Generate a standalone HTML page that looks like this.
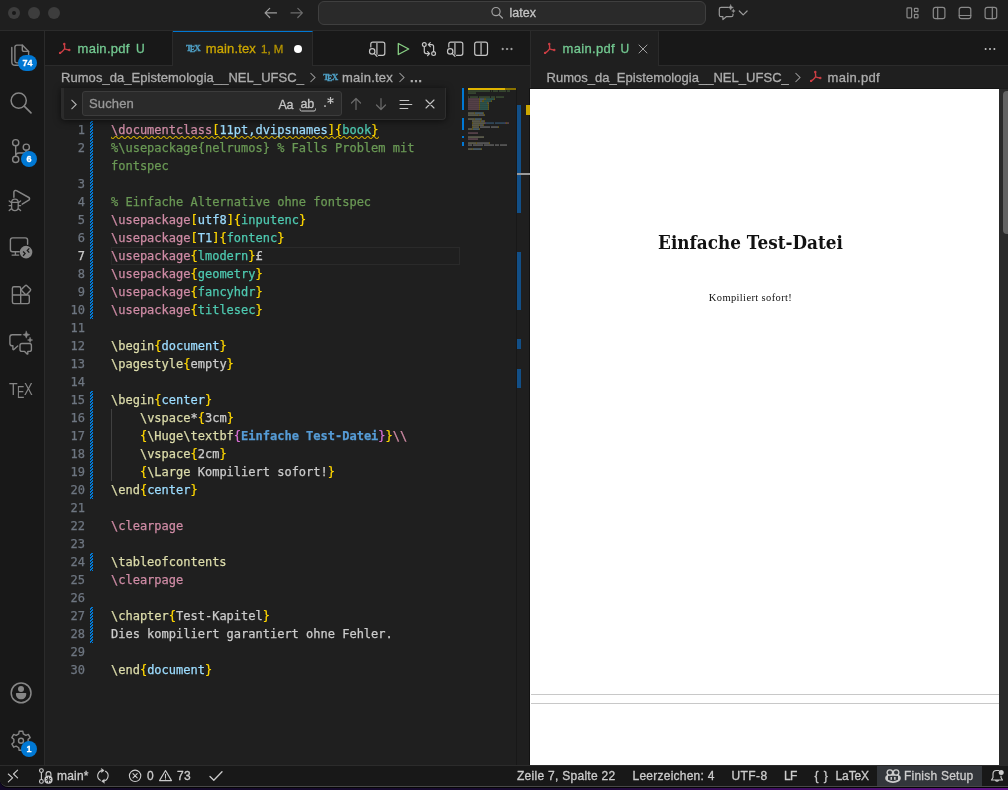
<!DOCTYPE html>
<html lang="de">
<head>
<meta charset="utf-8">
<title>main.tex — latex</title>
<style>
*{box-sizing:border-box;margin:0;padding:0}
html,body{width:1008px;height:790px;overflow:hidden;background:#1c1c1c}
body{font-family:"Liberation Sans",sans-serif;font-size:13px;color:#ccc;position:relative;-webkit-text-stroke:0.300px}
.abs{position:absolute}
#win{position:absolute;left:0;top:0;width:1008px;height:787px;border-bottom:1px solid #484848;box-shadow:0 1px 0 #050505;background:#181818;border-radius:0 0 0 8px;overflow:hidden;will-change:transform}
#deskbottom{position:absolute;left:0;top:776px;width:1008px;height:14px;background:linear-gradient(90deg,#120926 0%,#180a30 55%,#3a0c5c 75%,#64128a 100%)}
/* title bar */
#title{left:0;top:0;width:1008px;height:31px;background:#1f1f1f;border-bottom:1px solid #2b2b2b}
.tl{position:absolute;top:7px;width:12px;height:12px;border-radius:50%;background:#3d3d3d}
#cmd{left:318px;top:1px;width:388px;height:24px;background:#2a2a2a;border:1px solid #3f3f3f;border-radius:6px}
#cmd span{position:absolute;left:190.500px;top:3.500px;font-size:12.500px;line-height:15px;color:#c4c4c4}
/* activity bar */
#act{left:0;top:31px;width:45px;height:734px;background:#181818;border-right:1px solid #2b2b2b}
.badge{position:absolute;background:#0078d4;color:#fff;font-size:9px;font-weight:bold;border-radius:9px;height:16px;line-height:16px;text-align:center}
.tex{color:#868686;font-size:15.700px;line-height:11px;height:11px;transform-origin:0 0;-webkit-text-stroke:0}
/* tabs */
.tabs{top:31px;height:35px;background:#181818;border-bottom:1px solid #2b2b2b}
.tab{position:absolute;top:0;height:35px;border-right:1px solid #2b2b2b;font-size:13px;line-height:35px;white-space:nowrap}
.tab.active{background:#1f1f1f;height:35px;border-top:1px solid #0078d4;line-height:33px}
.texi{font-family:"Liberation Serif",serif;font-size:9px;font-weight:bold;line-height:10px;color:#4f9fc4}
.crumbs{top:66px;height:22px;background:#1f1f1f;font-size:13px;line-height:24px;color:#adadad;white-space:nowrap}
/* editor */
#ed1{left:45px;top:88px;width:485px;height:678px;background:#1f1f1f}
#ed2{left:530px;top:88px;width:478px;height:678px;background:#1f1f1f}
.code{font-family:"DejaVu Sans Mono","Liberation Mono",monospace;font-size:12px;line-height:18px;white-space:pre;-webkit-text-stroke:0.250px}
.ln{position:absolute;left:0;width:40px;text-align:right;color:#6e7681;height:18px}
.cl{position:absolute;left:66px;height:18px;color:#ccc}
.k{color:#cf8ba5}.y{color:#ffd700}.p{color:#9cdcfe}.c{color:#4ec9b0}.g{color:#6a9955}.f{color:#dcdcaa}.o{color:#da70d6}.b{color:#569cd6;font-weight:bold}
.ln.cur{color:#ccc}
.hatch{width:3px;background:repeating-linear-gradient(135deg,#0078d4 0 1.05px,#1f1f1f 1.05px 1.414px)}

.pdf{font-family:"Liberation Serif","DejaVu Serif",serif;white-space:nowrap;-webkit-text-stroke:0}
/* status */
#status{left:0;top:765px;width:1008px;height:21px;background:#181818;border-top:1px solid #2b2b2b;font-size:12px;line-height:21px;color:#ccc;white-space:nowrap}
#status span{position:absolute;top:0}
svg{position:absolute;overflow:visible}
</style>
</head>
<body>
<div id="deskbottom"></div>
<div id="win">

<!-- TITLE BAR -->
<div id="title" class="abs">
  <div class="tl" style="left:8px"><i class="abs" style="left:4px;top:4px;width:4px;height:4px;border-radius:50%;background:#181818"></i></div>
  <div class="tl" style="left:28px"></div>
  <div class="tl" style="left:48px"></div>
  <svg style="left:0;top:0" width="1008" height="30" viewBox="0 0 1008 30" fill="none" stroke="#8a8a8a" stroke-width="1.200" stroke-linecap="round" stroke-linejoin="round">
    <path d="M276.500 12.900H265.200M269.700 8.300L265.100 12.900L269.700 17.500" stroke="#9d9d9d"/>
    <path d="M291 12.900H302.300M297.800 8.300L302.400 12.900L297.800 17.500" stroke="#6c6c6c"/>
    <path d="M728 7.400H721.100A1.800 1.800 0 0 0 719.300 9.200V14.900A1.800 1.800 0 0 0 721.100 16.700H722.900V19.600L726.200 16.700H731.200A1.800 1.800 0 0 0 733 14.900V14" stroke="#9a9a9a"/>
    <path d="M730.700 4.700L731.500 6.600L733.400 7.400L731.500 8.200L730.700 10.100L729.900 8.200L728 7.400L729.900 6.600Z" fill="#9a9a9a" stroke="#9a9a9a" stroke-width="0.400"/>
    <path d="M733.400 9.200L733.900 10.500L735.200 11L733.900 11.500L733.400 12.800L732.900 11.500L731.600 11L732.900 10.500Z" fill="#9a9a9a" stroke="#9a9a9a" stroke-width="0.400"/>
    <path d="M739.300 11L743.200 14.900L747.100 11" stroke="#9a9a9a"/>
    <rect x="907" y="7.800" width="4.600" height="10" rx="0.800"/><rect x="914.400" y="8.300" width="3.600" height="3.400" rx="0.600"/><rect x="914.400" y="14.400" width="3.600" height="3.400" rx="0.600"/>
    <rect x="933.300" y="7.300" width="11.600" height="11.400" rx="2.200"/><path d="M937.700 7.300V18.700"/>
    <rect x="959.200" y="7.300" width="11.600" height="11.400" rx="2.200"/><path d="M959.200 15.500H970.800"/>
    <rect x="985.100" y="7.300" width="11.600" height="11.400" rx="2.200"/><path d="M992.300 7.300V18.700"/>
  </svg>
  <div id="cmd" class="abs"><svg style="left:171px;top:3px" width="14" height="14" viewBox="490 5 14 14" fill="none" stroke="#a0a0a0" stroke-width="1.200" stroke-linecap="round"><circle cx="496" cy="11.600" r="4.100"/><path d="M499 14.600L502.400 18"/></svg><span id="latex">latex</span></div>
</div>

<!-- ACTIVITY BAR -->
<div id="act" class="abs">
<svg style="left:0;top:0" width="45" height="735" viewBox="0 31 45 735" fill="none" stroke="#868686" stroke-width="1.4" stroke-linejoin="round" stroke-linecap="round">
<!-- explorer -->
<path d="M14.9 47A1.9 1.9 0 0 1 16.8 45.100H22.300L28.600 51.400V61A1.900 1.900 0 0 1 26.700 62.900H16.800A1.900 1.900 0 0 1 14.900 61Z"/>
<path d="M22.300 45.100V49.500A1.900 1.900 0 0 0 24.200 51.400H28.600"/>
<path d="M11.800 47.500V62A3.300 3.300 0 0 0 15.100 65.300H24"/>
<!-- search -->
<circle cx="18.700" cy="100.600" r="7.600" stroke-width="1.500"/><path d="M24.200 106.100L31 112.900" stroke-width="1.600"/>
<!-- scm -->
<circle cx="15.700" cy="142.700" r="3.100"/><circle cx="15.700" cy="159.400" r="3.100"/><circle cx="26.300" cy="147.200" r="3.100"/>
<path d="M15.700 145.800V156.300M26.300 150.300V150.500A2.500 2.500 0 0 1 23.800 153H19A3.300 3.300 0 0 0 15.700 156.300"/>
<!-- debug -->
<path d="M13.900 197.300V192.200A1.700 1.700 0 0 1 16.500 190.700L28.800 197.500A1.600 1.600 0 0 1 28.800 200.200L22.200 204.100" stroke-width="1.500"/>
<path d="M11.600 202.400A3.300 3.300 0 0 1 18.200 202.400V207.300A3.300 3.300 0 0 1 11.600 207.300ZM11.600 202.400H18.200M9.200 201L11.500 202.700M9.100 205.600H11.500M9.200 210.600L11.700 208.500M20.600 201L18.300 202.700M20.700 205.600H18.300M20.600 210.600L18.100 208.500" stroke-width="1.300"/>
<!-- remote -->
<path d="M27.600 244.200V240.100A2.200 2.200 0 0 0 25.400 237.900H12.600A2.200 2.200 0 0 0 10.400 240.100V249.600A2.200 2.200 0 0 0 12.600 251.800H19.200M15.400 251.800V255M12.100 255.100H18.700"/>
<circle cx="26.050" cy="252.100" r="6.300" fill="#868686" stroke="none"/>
<path d="M23.100 251.500L25.100 253.600L23.100 255.700M29.300 248.400L27.300 250.500L29.300 252.600" stroke="#181818" stroke-width="1.300" stroke-linecap="butt" stroke-linejoin="miter"/>
<!-- extensions -->
<path d="M12.400 288.200A1.500 1.500 0 0 1 13.900 286.700H19.200A1.500 1.500 0 0 1 20.700 288.200V295H27.800A1.500 1.500 0 0 1 29.300 296.500V302.100A1.500 1.500 0 0 1 27.800 303.600H13.900A1.500 1.500 0 0 1 12.400 302.100ZM12.400 295H20.700V303.600"/>
<rect x="22.450" y="286.300" width="7.200" height="7.200" rx="1.200" transform="rotate(45 26.050 289.900)"/>
<!-- chat -->
<path d="M21 334.700H12.300A2.400 2.400 0 0 0 9.900 337.100V343.400A2.400 2.400 0 0 0 12.300 345.800H12.900V349.200A0.600 0.600 0 0 0 13.900 349.600L17.700 345.900"/>
<path d="M22 343.500H29.400A2 2 0 0 1 31.400 345.500V349.400A2 2 0 0 1 29.400 351.400H27.800V353.800A0.400 0.400 0 0 1 27.100 354L24.600 351.400H22A2 2 0 0 1 20 349.400V345.500A2 2 0 0 1 22 343.500Z"/>
<path d="M26.300 331.200L27.300 333.700L29.800 334.700L27.300 335.700L26.300 338.200L25.300 335.700L22.800 334.700L25.300 333.700Z" fill="#868686" stroke-width="0.500"/>
<path d="M30.100 337.300L30.900 339.200L32.800 340L30.900 340.800L30.100 342.700L29.300 340.800L27.400 340L29.300 339.200Z" fill="#868686" stroke-width="0.400"/>
<!-- account -->
<circle cx="21.100" cy="692.900" r="9.900" stroke-width="1.500"/>
<circle cx="21" cy="689" r="3" fill="#868686" stroke="none"/>
<path d="M16.600 693H25.600A0.700 0.700 0 0 1 26.300 693.700C26.300 697.200 24.200 699.300 21.100 699.300S15.900 697.200 15.900 693.700A0.700 0.700 0 0 1 16.600 693Z" fill="#868686" stroke="none"/>
<!-- gear -->
<path d="M23.26 733.86 L22.85 731.28 L19.15 731.28 L18.74 733.86 L16.12 735.38 L13.68 734.44 L11.83 737.64 L13.86 739.28 L13.86 742.32 L11.83 743.96 L13.68 747.16 L16.12 746.22 L18.74 747.74 L19.15 750.32 L22.85 750.32 L23.26 747.74 L25.88 746.22 L28.32 747.16 L30.17 743.96 L28.14 742.32 L28.14 739.28 L30.17 737.64 L28.32 734.44 L25.88 735.38Z" stroke-width="1.400"/>
<circle cx="21" cy="740.800" r="2.500" stroke-width="1.400"/>
</svg>
<div class="badge" style="left:18px;top:24px;width:19px">74</div>
<div class="badge" style="left:21px;top:120px;width:16px">6</div>
<div class="badge" style="left:21px;top:710px;width:16px">1</div>
<div class="abs tex" style="left:8.800px;top:353.100px;transform:scaleX(0.900)">T</div><div class="abs tex" style="left:17px;top:356.100px;transform:scaleX(0.700)">E</div><div class="abs tex" style="left:23.900px;top:353.100px;transform:scaleX(0.830)">X</div>
</div>

<!-- GROUP 1 -->
<div class="abs tabs" style="left:45px;width:485px">
  <div class="tab" style="left:0;width:128px">
    <svg style="left:13px;top:11px" width="13" height="13" viewBox="58 42 13 13" fill="none" stroke="#cc3e44" stroke-width="1.400" stroke-linecap="round"><path d="M64.300 43.800C64.600 46 64.800 47.500 64.600 48.900C63.500 50.500 62 52 60 53M64.600 48.900C66 49.500 67.500 49.900 69.400 50"/><circle cx="64.300" cy="43.900" r="0.500"/><circle cx="60.100" cy="52.900" r="0.500"/><circle cx="69.300" cy="50" r="0.500"/></svg>
    <span class="abs t" id="t1" style="left:32.500px;letter-spacing:0.300px;color:#73c991">main.pdf</span><span class="abs t" id="t1u" style="left:91px;top:1.300px;color:#73c991;font-size:12px">U</span></div>
  <div class="tab active" style="left:128px;width:140px">
    <span class="abs texi" style="left:13px;top:10.700px">T</span><span class="abs texi" style="left:17.100px;top:13px;font-size:7.500px">E</span><span class="abs texi" style="left:21.300px;top:10.700px">X</span>
    <span class="abs t" id="t2" style="left:32.800px;letter-spacing:0.120px;color:#cca700">main.tex</span><span class="abs t" id="t2m" style="left:88px;top:1px;color:#b59400;font-size:11.500px">1, M</span>
    <i class="abs" style="left:121px;top:12.800px;width:8.400px;height:8.400px;border-radius:50%;background:#fff"></i></div>
  <!-- editor actions -->
  <svg style="left:315px;top:0" width="170" height="34" viewBox="360 31 170 34" fill="none" stroke="#c5c5c5" stroke-width="1.200" stroke-linejoin="round" stroke-linecap="round">
    <path d="M376 42.200H382.800A2 2 0 0 1 384.800 44.200V53.300A2 2 0 0 1 382.800 55.300H378.500M376 42.200H372.800A2 2 0 0 0 370.800 44.200V47" /><path d="M376.900 42.800V54.700" stroke="#8c8c8c" stroke-width="1.800" stroke-linecap="butt"/><circle cx="372.200" cy="51.400" r="2.700"/><path d="M374.100 53.400L377 56.400"/>
    <path d="M398.300 43.500V54.500L408.700 49Z" stroke="#89d185" stroke-width="1.300"/>
    <circle cx="424.300" cy="44.600" r="1.900"/><circle cx="433.600" cy="53.600" r="1.900"/><path d="M424.300 46.500V51.600A2 2 0 0 0 426.300 53.600H429.500M427.600 51.600L429.600 53.600L427.600 55.600M433.600 51.700V46.600A2 2 0 0 0 431.600 44.600H428.500M430.300 42.600L428.300 44.600L430.300 46.600"/>
    <path d="M454 42.200H460.800A2 2 0 0 1 462.800 44.200V53.300A2 2 0 0 1 460.800 55.300H456.500M454 42.200H450.800A2 2 0 0 0 448.800 44.200V47" /><path d="M454.900 42.800V54.700" stroke="#8c8c8c" stroke-width="1.800" stroke-linecap="butt"/><circle cx="450.200" cy="51.400" r="2.700"/><path d="M452.100 53.400L455 56.400"/>
    <rect x="474.700" y="42.200" width="12.800" height="13.100" rx="2"/><path d="M481.100 42.800V54.700" stroke="#8c8c8c" stroke-width="1.800" stroke-linecap="butt"/>
    <circle cx="502.600" cy="49" r="0.800" fill="#c5c5c5" stroke-width="0.400"/><circle cx="507" cy="49" r="0.800" fill="#c5c5c5" stroke-width="0.400"/><circle cx="511.400" cy="49" r="0.800" fill="#c5c5c5" stroke-width="0.400"/>
  </svg>
</div>
<div class="abs crumbs" style="left:45px;width:485px"><span class="abs" id="c1" style="left:16px;letter-spacing:0.050px">Rumos_da_Epistemologia__NEL_UFSC_</span>
  <svg style="left:264px;top:6px" width="8" height="11" viewBox="0 0 8 11" fill="none" stroke="#9c9c9c" stroke-width="1.050"><path d="M1.500 1L6 5.500L1.500 10"/></svg>
  <span class="abs texi" style="left:278.300px;top:5.700px">T</span><span class="abs texi" style="left:282.300px;top:8px;font-size:7.500px">E</span><span class="abs texi" style="left:286.700px;top:5.700px">X</span>
  <span class="abs" id="c2" style="left:297px;letter-spacing:0.240px">main.tex</span>
  <svg style="left:353px;top:6px" width="8" height="11" viewBox="0 0 8 11" fill="none" stroke="#9c9c9c" stroke-width="1.050"><path d="M1.500 1L6 5.500L1.500 10"/></svg>
  <span class="abs" id="c3" style="left:364.500px;letter-spacing:-0.600px;font-weight:bold">…</span></div>
<div id="ed1" class="abs">
<!-- gutter diff decorations -->
<svg style="left:45px;top:0" width="3" height="678" viewBox="0 0 3 678" shape-rendering="crispEdges"><defs><pattern id="hat" width="3" height="3" patternUnits="userSpaceOnUse"><rect width="3" height="3" fill="#007ad8"/><rect x="0" y="0" width="1" height="1" fill="#1f1f1f"/><rect x="2" y="1" width="1" height="1" fill="#1f1f1f"/><rect x="1" y="2" width="1" height="1" fill="#1f1f1f"/></pattern></defs><rect x="0" y="33" width="3" height="198" fill="url(#hat)"/><rect x="0" y="303" width="3" height="108" fill="url(#hat)"/><rect x="0" y="465" width="3" height="18" fill="url(#hat)"/><rect x="0" y="519" width="3" height="36" fill="url(#hat)"/></svg>
<div class="abs" style="left:484px;top:0;width:1px;height:678px;background:#121212"></div>
<!-- current line -->
<div class="abs" style="left:66px;top:159px;width:349px;height:18px;border:1px solid #2a2a2a"></div>
<!-- indent guide -->
<div class="abs" style="left:66px;top:321px;width:1px;height:72px;background:#404040"></div>
<svg style="left:66px;top:48px" width="268" height="3" viewBox="0 0 268 3"><defs><pattern id="sqg" width="6" height="3" patternUnits="userSpaceOnUse"><g fill="#cca700"><polygon points="5.500,0 2.500,3 1.100,3 4.100,0"/><polygon points="4,0 6,2 6,0.600 5.400,0"/><polygon points="0,2 1,3 2.400,3 0,0.600"/></g></pattern></defs><rect width="268" height="3" fill="url(#sqg)"/></svg>
<!--CODE-->
<div class="ln code" style="top:33px">1</div>
<div class="cl code" style="top:33px"><span class="k sq">\documentclass</span><span class="sq"><span class="y">[</span><span class="p">11pt,dvipsnames</span><span class="y">]</span><span class="y">{</span><span class="c">book</span><span class="y">}</span></span></div>
<div class="ln code" style="top:51px">2</div>
<div class="cl code" style="top:51px"><span class="g">%\usepackage{nelrumos} % Falls Problem mit</span></div>
<div class="cl code" style="top:69px"><span class="g">fontspec</span></div>
<div class="ln code" style="top:87px">3</div>
<div class="ln code" style="top:105px">4</div>
<div class="cl code" style="top:105px"><span class="g">% Einfache Alternative ohne fontspec</span></div>
<div class="ln code" style="top:123px">5</div>
<div class="cl code" style="top:123px"><span class="k">\usepackage</span><span class="y">[</span><span class="p">utf8</span><span class="y">]{</span><span class="c">inputenc</span><span class="y">}</span></div>
<div class="ln code" style="top:141px">6</div>
<div class="cl code" style="top:141px"><span class="k">\usepackage</span><span class="y">[</span><span class="p">T1</span><span class="y">]{</span><span class="c">fontenc</span><span class="y">}</span></div>
<div class="ln code cur" style="top:159px">7</div>
<div class="cl code" style="top:159px"><span class="k">\usepackage</span><span class="y">{</span><span class="c">lmodern</span><span class="y">}</span>£</div>
<div class="ln code" style="top:177px">8</div>
<div class="cl code" style="top:177px"><span class="k">\usepackage</span><span class="y">{</span><span class="c">geometry</span><span class="y">}</span></div>
<div class="ln code" style="top:195px">9</div>
<div class="cl code" style="top:195px"><span class="k">\usepackage</span><span class="y">{</span><span class="c">fancyhdr</span><span class="y">}</span></div>
<div class="ln code" style="top:213px">10</div>
<div class="cl code" style="top:213px"><span class="k">\usepackage</span><span class="y">{</span><span class="c">titlesec</span><span class="y">}</span></div>
<div class="ln code" style="top:231px">11</div>
<div class="ln code" style="top:249px">12</div>
<div class="cl code" style="top:249px"><span class="f">\begin</span><span class="y">{</span><span class="p">document</span><span class="y">}</span></div>
<div class="ln code" style="top:267px">13</div>
<div class="cl code" style="top:267px"><span class="f">\pagestyle</span><span class="y">{</span>empty<span class="y">}</span></div>
<div class="ln code" style="top:285px">14</div>
<div class="ln code" style="top:303px">15</div>
<div class="cl code" style="top:303px"><span class="f">\begin</span><span class="y">{</span><span class="p">center</span><span class="y">}</span></div>
<div class="ln code" style="top:321px">16</div>
<div class="cl code" style="top:321px">    <span class="f">\vspace</span>*<span class="y">{</span>3cm<span class="y">}</span></div>
<div class="ln code" style="top:339px">17</div>
<div class="cl code" style="top:339px">    <span class="y">{</span><span class="f">\Huge\textbf</span><span class="o">{</span><span class="b">Einfache Test-Datei</span><span class="o">}</span><span class="y">}</span><span class="k">\\</span></div>
<div class="ln code" style="top:357px">18</div>
<div class="cl code" style="top:357px">    <span class="f">\vspace</span><span class="y">{</span>2cm<span class="y">}</span></div>
<div class="ln code" style="top:375px">19</div>
<div class="cl code" style="top:375px">    <span class="y">{</span><span class="f">\Large</span> Kompiliert sofort!<span class="y">}</span></div>
<div class="ln code" style="top:393px">20</div>
<div class="cl code" style="top:393px"><span class="f">\end</span><span class="y">{</span><span class="p">center</span><span class="y">}</span></div>
<div class="ln code" style="top:411px">21</div>
<div class="ln code" style="top:429px">22</div>
<div class="cl code" style="top:429px"><span class="k">\clearpage</span></div>
<div class="ln code" style="top:447px">23</div>
<div class="ln code" style="top:465px">24</div>
<div class="cl code" style="top:465px"><span class="f">\tableofcontents</span></div>
<div class="ln code" style="top:483px">25</div>
<div class="cl code" style="top:483px"><span class="k">\clearpage</span></div>
<div class="ln code" style="top:501px">26</div>
<div class="ln code" style="top:519px">27</div>
<div class="cl code" style="top:519px"><span class="f">\chapter</span><span class="y">{</span>Test-Kapitel<span class="y">}</span></div>
<div class="ln code" style="top:537px">28</div>
<div class="cl code" style="top:537px">Dies kompiliert garantiert ohne Fehler.</div>
<div class="ln code" style="top:555px">29</div>
<div class="ln code" style="top:573px">30</div>
<div class="cl code" style="top:573px"><span class="f">\end</span><span class="y">{</span><span class="p">document</span><span class="y">}</span></div>
<!--/CODE-->
<svg style="left:0;top:0" width="485" height="678" viewBox="45 88 485 678">
<g opacity="0.5">
<rect x="468" y="88.5" width="14" height="1.100" fill="#cf8ba5"/>
<rect x="482" y="88.5" width="1" height="1.100" fill="#ffd700"/>
<rect x="483" y="88.5" width="15" height="1.100" fill="#9cdcfe"/>
<rect x="498" y="88.5" width="1" height="1.100" fill="#ffd700"/>
<rect x="499" y="88.5" width="1" height="1.100" fill="#ffd700"/>
<rect x="500" y="88.5" width="4" height="1.100" fill="#4ec9b0"/>
<rect x="504" y="88.5" width="1" height="1.100" fill="#ffd700"/>
<rect x="468" y="90.5" width="22" height="1.100" fill="#6a9955"/>
<rect x="491" y="90.5" width="1" height="1.100" fill="#6a9955"/>
<rect x="493" y="90.5" width="5" height="1.100" fill="#6a9955"/>
<rect x="499" y="90.5" width="7" height="1.100" fill="#6a9955"/>
<rect x="507" y="90.5" width="3" height="1.100" fill="#6a9955"/>
<rect x="468" y="92.5" width="8" height="1.100" fill="#6a9955"/>
<rect x="468" y="96.5" width="1" height="1.100" fill="#6a9955"/>
<rect x="470" y="96.5" width="8" height="1.100" fill="#6a9955"/>
<rect x="479" y="96.5" width="11" height="1.100" fill="#6a9955"/>
<rect x="491" y="96.5" width="4" height="1.100" fill="#6a9955"/>
<rect x="496" y="96.5" width="8" height="1.100" fill="#6a9955"/>
<rect x="468" y="98.5" width="11" height="1.100" fill="#cf8ba5"/>
<rect x="479" y="98.5" width="1" height="1.100" fill="#ffd700"/>
<rect x="480" y="98.5" width="4" height="1.100" fill="#9cdcfe"/>
<rect x="484" y="98.5" width="2" height="1.100" fill="#ffd700"/>
<rect x="486" y="98.5" width="8" height="1.100" fill="#4ec9b0"/>
<rect x="494" y="98.5" width="1" height="1.100" fill="#ffd700"/>
<rect x="468" y="100.5" width="11" height="1.100" fill="#cf8ba5"/>
<rect x="479" y="100.5" width="1" height="1.100" fill="#ffd700"/>
<rect x="480" y="100.5" width="2" height="1.100" fill="#9cdcfe"/>
<rect x="482" y="100.5" width="2" height="1.100" fill="#ffd700"/>
<rect x="484" y="100.5" width="7" height="1.100" fill="#4ec9b0"/>
<rect x="491" y="100.5" width="1" height="1.100" fill="#ffd700"/>
<rect x="468" y="102.5" width="11" height="1.100" fill="#cf8ba5"/>
<rect x="479" y="102.5" width="1" height="1.100" fill="#ffd700"/>
<rect x="480" y="102.5" width="7" height="1.100" fill="#4ec9b0"/>
<rect x="487" y="102.5" width="1" height="1.100" fill="#ffd700"/>
<rect x="488" y="102.5" width="1" height="1.100" fill="#cccccc"/>
<rect x="468" y="104.5" width="11" height="1.100" fill="#cf8ba5"/>
<rect x="479" y="104.5" width="1" height="1.100" fill="#ffd700"/>
<rect x="480" y="104.5" width="8" height="1.100" fill="#4ec9b0"/>
<rect x="488" y="104.5" width="1" height="1.100" fill="#ffd700"/>
<rect x="468" y="106.5" width="11" height="1.100" fill="#cf8ba5"/>
<rect x="479" y="106.5" width="1" height="1.100" fill="#ffd700"/>
<rect x="480" y="106.5" width="8" height="1.100" fill="#4ec9b0"/>
<rect x="488" y="106.5" width="1" height="1.100" fill="#ffd700"/>
<rect x="468" y="108.5" width="11" height="1.100" fill="#cf8ba5"/>
<rect x="479" y="108.5" width="1" height="1.100" fill="#ffd700"/>
<rect x="480" y="108.5" width="8" height="1.100" fill="#4ec9b0"/>
<rect x="488" y="108.5" width="1" height="1.100" fill="#ffd700"/>
<rect x="468" y="112.5" width="6" height="1.100" fill="#dcdcaa"/>
<rect x="474" y="112.5" width="1" height="1.100" fill="#ffd700"/>
<rect x="475" y="112.5" width="8" height="1.100" fill="#9cdcfe"/>
<rect x="483" y="112.5" width="1" height="1.100" fill="#ffd700"/>
<rect x="468" y="114.5" width="10" height="1.100" fill="#dcdcaa"/>
<rect x="478" y="114.5" width="1" height="1.100" fill="#ffd700"/>
<rect x="479" y="114.5" width="5" height="1.100" fill="#cccccc"/>
<rect x="484" y="114.5" width="1" height="1.100" fill="#ffd700"/>
<rect x="468" y="118.5" width="6" height="1.100" fill="#dcdcaa"/>
<rect x="474" y="118.5" width="1" height="1.100" fill="#ffd700"/>
<rect x="475" y="118.5" width="6" height="1.100" fill="#9cdcfe"/>
<rect x="481" y="118.5" width="1" height="1.100" fill="#ffd700"/>
<rect x="472" y="120.5" width="7" height="1.100" fill="#dcdcaa"/>
<rect x="479" y="120.5" width="1" height="1.100" fill="#cccccc"/>
<rect x="480" y="120.5" width="1" height="1.100" fill="#ffd700"/>
<rect x="481" y="120.5" width="3" height="1.100" fill="#cccccc"/>
<rect x="484" y="120.5" width="1" height="1.100" fill="#ffd700"/>
<rect x="472" y="122.5" width="1" height="1.100" fill="#ffd700"/>
<rect x="473" y="122.5" width="12" height="1.100" fill="#dcdcaa"/>
<rect x="485" y="122.5" width="1" height="1.100" fill="#da70d6"/>
<rect x="486" y="122.5" width="8" height="1.100" fill="#569cd6"/>
<rect x="495" y="122.5" width="10" height="1.100" fill="#569cd6"/>
<rect x="505" y="122.5" width="1" height="1.100" fill="#da70d6"/>
<rect x="506" y="122.5" width="1" height="1.100" fill="#ffd700"/>
<rect x="507" y="122.5" width="2" height="1.100" fill="#cf8ba5"/>
<rect x="472" y="124.5" width="7" height="1.100" fill="#dcdcaa"/>
<rect x="479" y="124.5" width="1" height="1.100" fill="#ffd700"/>
<rect x="480" y="124.5" width="3" height="1.100" fill="#cccccc"/>
<rect x="483" y="124.5" width="1" height="1.100" fill="#ffd700"/>
<rect x="472" y="126.5" width="1" height="1.100" fill="#ffd700"/>
<rect x="473" y="126.5" width="6" height="1.100" fill="#dcdcaa"/>
<rect x="480" y="126.5" width="10" height="1.100" fill="#cccccc"/>
<rect x="491" y="126.5" width="7" height="1.100" fill="#cccccc"/>
<rect x="498" y="126.5" width="1" height="1.100" fill="#ffd700"/>
<rect x="468" y="128.5" width="4" height="1.100" fill="#dcdcaa"/>
<rect x="472" y="128.5" width="1" height="1.100" fill="#ffd700"/>
<rect x="473" y="128.5" width="6" height="1.100" fill="#9cdcfe"/>
<rect x="479" y="128.5" width="1" height="1.100" fill="#ffd700"/>
<rect x="468" y="132.5" width="10" height="1.100" fill="#cf8ba5"/>
<rect x="468" y="136.5" width="16" height="1.100" fill="#dcdcaa"/>
<rect x="468" y="138.5" width="10" height="1.100" fill="#cf8ba5"/>
<rect x="468" y="142.5" width="8" height="1.100" fill="#dcdcaa"/>
<rect x="476" y="142.5" width="1" height="1.100" fill="#ffd700"/>
<rect x="477" y="142.5" width="12" height="1.100" fill="#cccccc"/>
<rect x="489" y="142.5" width="1" height="1.100" fill="#ffd700"/>
<rect x="468" y="144.5" width="4" height="1.100" fill="#cccccc"/>
<rect x="473" y="144.5" width="10" height="1.100" fill="#cccccc"/>
<rect x="484" y="144.5" width="10" height="1.100" fill="#cccccc"/>
<rect x="495" y="144.5" width="4" height="1.100" fill="#cccccc"/>
<rect x="500" y="144.5" width="7" height="1.100" fill="#cccccc"/>
<rect x="468" y="148.5" width="4" height="1.100" fill="#dcdcaa"/>
<rect x="472" y="148.5" width="1" height="1.100" fill="#ffd700"/>
<rect x="473" y="148.5" width="8" height="1.100" fill="#9cdcfe"/>
<rect x="481" y="148.5" width="1" height="1.100" fill="#ffd700"/>
</g><g shape-rendering="crispEdges">
<rect x="468" y="88" width="48" height="2" fill="#8a7200"/><rect x="468" y="88" width="37" height="2" fill="#e0b400"/>
<rect x="462" y="88" width="2" height="22" fill="#0078d4"/>
<rect x="462" y="118" width="2" height="12" fill="#0078d4"/>
<rect x="462" y="136" width="2" height="2" fill="#0078d4"/>
<rect x="462" y="142" width="2" height="4" fill="#0078d4"/>
<rect x="516" y="88" width="1" height="678" fill="#181818"/>
<rect x="517" y="105" width="4" height="108" fill="#124f87"/>
<rect x="517" y="252" width="4" height="58" fill="#124f87"/>
<rect x="517" y="339" width="4" height="10" fill="#124f87"/>
<rect x="517" y="369" width="4" height="19" fill="#124f87"/>
<rect x="526" y="105" width="4" height="10" fill="#cca700"/>
<rect x="517" y="173" width="13" height="2" fill="#9a9a9a"/>
</g></svg>
<!-- find widget -->
<div class="abs" id="find" style="left:16px;top:0;width:385px;height:32px;background:#202020;border-left:3px solid #2b2b2b;border-right:1px solid #2e2e2e;border-bottom:1px solid #2e2e2e;border-radius:0 0 4px 4px;box-shadow:0 1px 7px rgba(0,0,0,0.600)">
  <svg style="left:6px;top:10.500px" width="8" height="11" viewBox="0 0 8 11" fill="none" stroke="#b4b4b4" stroke-width="1.100"><path d="M1.500 0.800L6.200 5.500L1.500 10.200"/></svg>
  <div class="abs" style="left:18px;top:3px;width:260px;height:25px;background:#2a2a2a;border:1px solid #3c3c3c;border-radius:3px"></div>
  <span class="abs" id="such" style="left:25px;letter-spacing:0.150px;top:8px;font-size:13px;line-height:16px;color:#989898">Suchen</span>
  <span class="abs" style="left:214.500px;top:9px;font-size:12.500px;line-height:16px;color:#c5c5c5;letter-spacing:-0.300px">Aa</span>
  <span class="abs" style="left:236.500px;top:7.500px;font-size:12.500px;line-height:16px;color:#c5c5c5;letter-spacing:-0.200px">ab</span>
  <svg style="left:235px;top:6.600px" width="20" height="20" viewBox="0 0 20 20" fill="none" stroke="#c5c5c5" stroke-width="1"><path d="M1 13.500V14.500A1.500 1.500 0 0 0 2.500 16H15A1.500 1.500 0 0 0 16.500 14.500V13.500"/></svg>
  <svg style="left:258px;top:6px" width="14" height="16" viewBox="0 0 14 16" fill="none" stroke="#c5c5c5" stroke-width="1.200"><rect x="2.200" y="11.300" width="1.600" height="1.600" fill="#c5c5c5" stroke="none"/><path d="M8.500 3V10M5.500 4.800L11.500 8.200M11.500 4.800L5.500 8.200"/></svg>
  <svg style="left:286px;top:9px" width="12" height="14" viewBox="0 0 12 14" fill="none" stroke="#6b6b6b" stroke-width="1.200" stroke-linecap="round" stroke-linejoin="round"><path d="M6 12.500V1.500M1.500 6L6 1.500L10.500 6"/></svg>
  <svg style="left:311px;top:9px" width="12" height="14" viewBox="0 0 12 14" fill="none" stroke="#6b6b6b" stroke-width="1.200" stroke-linecap="round" stroke-linejoin="round"><path d="M6 1.500V12.500M1.500 8L6 12.500L10.500 8"/></svg>
  <svg style="left:335px;top:10px" width="14" height="12" viewBox="0 0 14 12" fill="none" stroke="#c5c5c5" stroke-width="1.100" stroke-linecap="round"><path d="M1 2.500H9.800M1 6.500H12.800M1 10.500H8.800"/></svg>
  <svg style="left:361px;top:11px" width="10" height="10" viewBox="0 0 10 10" fill="none" stroke="#c5c5c5" stroke-width="1.100" stroke-linecap="round"><path d="M1 1L9 9M9 1L1 9"/></svg>
</div>
</div>

<!-- GROUP 2 -->
<div class="abs tabs" style="left:530px;width:478px;border-left:1px solid #2b2b2b">
  <div class="tab active" style="left:0;width:128px;border-top-color:#1f1f1f;">
    <svg style="left:12px;top:10px" width="13" height="13" viewBox="58 42 13 13" fill="none" stroke="#cc3e44" stroke-width="1.400" stroke-linecap="round"><path d="M64.300 43.800C64.600 46 64.800 47.500 64.600 48.900C63.500 50.500 62 52 60 53M64.600 48.900C66 49.500 67.500 49.900 69.400 50"/><circle cx="64.300" cy="43.900" r="0.500"/><circle cx="60.100" cy="52.900" r="0.500"/><circle cx="69.300" cy="50" r="0.500"/></svg>
    <span class="abs t" id="t3" style="left:31.500px;letter-spacing:0.330px;color:#73c991">main.pdf</span><span class="abs t" id="t3u" style="left:89.500px;top:1.300px;color:#73c991;font-size:12px">U</span>
    <svg style="left:107px;top:12px" width="10" height="10" viewBox="0 0 10 10" stroke="#a0a0a0" stroke-width="1" stroke-linecap="round"><path d="M1 1L9 9M9 1L1 9"/></svg>
  </div>
  <svg style="left:452px;top:16px" width="14" height="4" viewBox="0 0 14 4"><circle cx="2.600" cy="2" r="1" fill="#c5c5c5"/><circle cx="7" cy="2" r="1" fill="#c5c5c5"/><circle cx="11.400" cy="2" r="1" fill="#c5c5c5"/></svg>
</div>
<div class="abs crumbs" style="left:530px;width:478px;border-left:1px solid #2b2b2b"><span class="abs" id="c4" style="left:15.500px;letter-spacing:0.030px">Rumos_da_Epistemologia__NEL_UFSC_</span>
  <svg style="left:263px;top:6px" width="8" height="11" viewBox="0 0 8 11" fill="none" stroke="#9c9c9c" stroke-width="1.050"><path d="M1.500 1L6 5.500L1.500 10"/></svg>
  <svg style="left:278px;top:4px" width="13" height="13" viewBox="58 42 13 13" fill="none" stroke="#cc3e44" stroke-width="1.400" stroke-linecap="round"><path d="M64.300 43.800C64.600 46 64.800 47.500 64.600 48.900C63.500 50.500 62 52 60 53M64.600 48.900C66 49.500 67.500 49.900 69.400 50"/><circle cx="64.300" cy="43.900" r="0.500"/><circle cx="60.100" cy="52.900" r="0.500"/><circle cx="69.300" cy="50" r="0.500"/></svg>
  <span class="abs" id="c5" style="left:296.500px;letter-spacing:0.330px">main.pdf</span></div>
<div id="ed2" class="abs">
  <div class="abs" style="left:0;top:0;width:469px;height:678px;background:#fff;border-top:1px solid #151515"></div>
  <div class="abs" style="left:1px;top:606px;width:468px;height:1px;background:#c8c8c8"></div>
  <div class="abs" style="left:1px;top:615px;width:468px;height:1px;background:#c8c8c8"></div>
  <div class="abs" style="left:469px;top:0;width:9px;height:678px;background:#2a2a2a;border-top:1px solid #1c1c1c"></div>
  <div class="abs" style="left:473px;top:3px;width:11px;height:143px;background:#636363;border-radius:4px"></div>
  <div class="abs pdf" id="ptitle" style="left:0;top:142px;width:441px;text-align:center;font-weight:bold;font-family:'DejaVu Serif',serif;font-size:18px;transform:scaleX(0.936);transform-origin:220.500px 50%;line-height:26px;color:#111">Einfache Test-Datei</div>
  <div class="abs pdf" id="psub" style="left:0;top:203px;width:441px;text-align:center;letter-spacing:0.370px;font-size:10.500px;line-height:14px;color:#111">Kompiliert sofort!</div>
</div>

<!-- STATUS BAR -->
<div id="status" class="abs">
  <svg style="left:0;top:0" width="1008" height="20" viewBox="0 766 1008 20" fill="none" stroke="#cccccc" stroke-width="1.200" stroke-linecap="round" stroke-linejoin="round">
    <path d="M8.300 774L12.600 777.900L8.300 781.800M17.600 770.200L13.500 774L17.600 777.800" stroke-width="1.100"/>
    <circle cx="41.400" cy="770.600" r="1.900" stroke-width="1.100"/><circle cx="41.400" cy="781.400" r="1.900" stroke-width="1.100"/><path d="M41.400 772.500V779.500" stroke-width="1.100"/><path d="M46.100 775.500V774A2.400 2.400 0 0 1 50.900 774V775.500" stroke-width="1.100"/>
    <circle cx="48.500" cy="779.700" r="4.100" fill="#cccccc" stroke="none"/><path d="M48.500 777.200V782.200M46.300 778.500L50.700 780.900M50.700 778.500L46.300 780.900" stroke="#181818" stroke-width="0.900"/>
    <path d="M102.900 770.600A5.200 5.200 0 0 0 100.300 780.300M102.900 781A5.200 5.200 0 0 0 105.500 771.300" stroke-width="1.100"/><path d="M101.600 768.600L104.200 770.500L101.600 772.500ZM104.200 779.300L101.600 781.200L104.200 783.100Z" fill="#cccccc" stroke-width="0.400"/>
    <circle cx="135.100" cy="775.800" r="5.700" stroke-width="1.100"/><path d="M133 773.700L137.200 777.900M137.200 773.700L133 777.900" stroke-width="1.100"/>
    <path d="M165.500 770.500L171.500 780.600H159.500Z" stroke-width="1.100"/><path d="M165.500 774.300V777.500M165.500 778.900V779.100" stroke-width="1.100"/>
    <path d="M210 776.500L213.800 780.300L222 771.800" stroke-width="1.300"/>
    
  </svg>
  <span id="s1" style="left:57px;letter-spacing:0.200px">main*</span>
  <span id="s2" style="left:147px">0</span>
  <span id="s3" style="left:177px;letter-spacing:0.300px">73</span>
  <span id="s4" style="left:517px;letter-spacing:0.280px">Zeile 7, Spalte 22</span>
  <span id="s5" style="left:632.500px;letter-spacing:0.240px">Leerzeichen: 4</span>
  <span id="s6" style="left:731.500px;letter-spacing:0.400px">UTF-8</span>
  <span id="s7" style="left:784px;letter-spacing:-0.700px">LF</span>
  <span id="s8b" style="left:814.500px;letter-spacing:1px;font-size:12px">{ }</span>
  <span id="s8" style="left:835.500px;letter-spacing:-0.100px">LaTeX</span>
  <span style="left:877px;width:105px;height:20px;background:#33363b"></span>
  <svg style="left:884px;top:2px" width="18" height="16" viewBox="884 768 18 16" stroke="none">
    <ellipse cx="893" cy="778.100" rx="7.900" ry="4.900" fill="#cccccc"/>
    <circle cx="889.900" cy="772.600" r="3.400" fill="#cccccc"/><circle cx="896.100" cy="772.600" r="3.400" fill="#cccccc"/>
    <circle cx="889.900" cy="772.500" r="2.050" fill="#33363b"/><circle cx="896.100" cy="772.500" r="2.050" fill="#33363b"/>
    <path d="M888 776.100Q893 775.200 898 776.100V779.800Q893 782.600 888 779.800Z" fill="#33363b"/>
    <rect x="890.500" y="777" width="1.500" height="2.800" fill="#cccccc"/><rect x="894.100" y="777" width="1.500" height="2.800" fill="#cccccc"/>
  </svg>
  <span id="s9" style="left:904px;letter-spacing:0.230px">Finish Setup</span>
  <svg style="left:989.400px;top:2px" width="16" height="16" viewBox="992 768 16 16" fill="none" stroke="#cccccc" stroke-width="1.100" stroke-linecap="round" stroke-linejoin="round">
    <path d="M1002 770.500H999.500A3.500 3.500 0 0 0 996 774V777.500L994.500 780H1005.500L1004 777.500V776M998.500 780.200A1.600 1.600 0 0 0 1001.500 780.200"/><circle cx="1004.200" cy="772.400" r="2.500" fill="#cccccc" stroke="none"/>
  </svg>
</div>

</div>
</body>
</html>
